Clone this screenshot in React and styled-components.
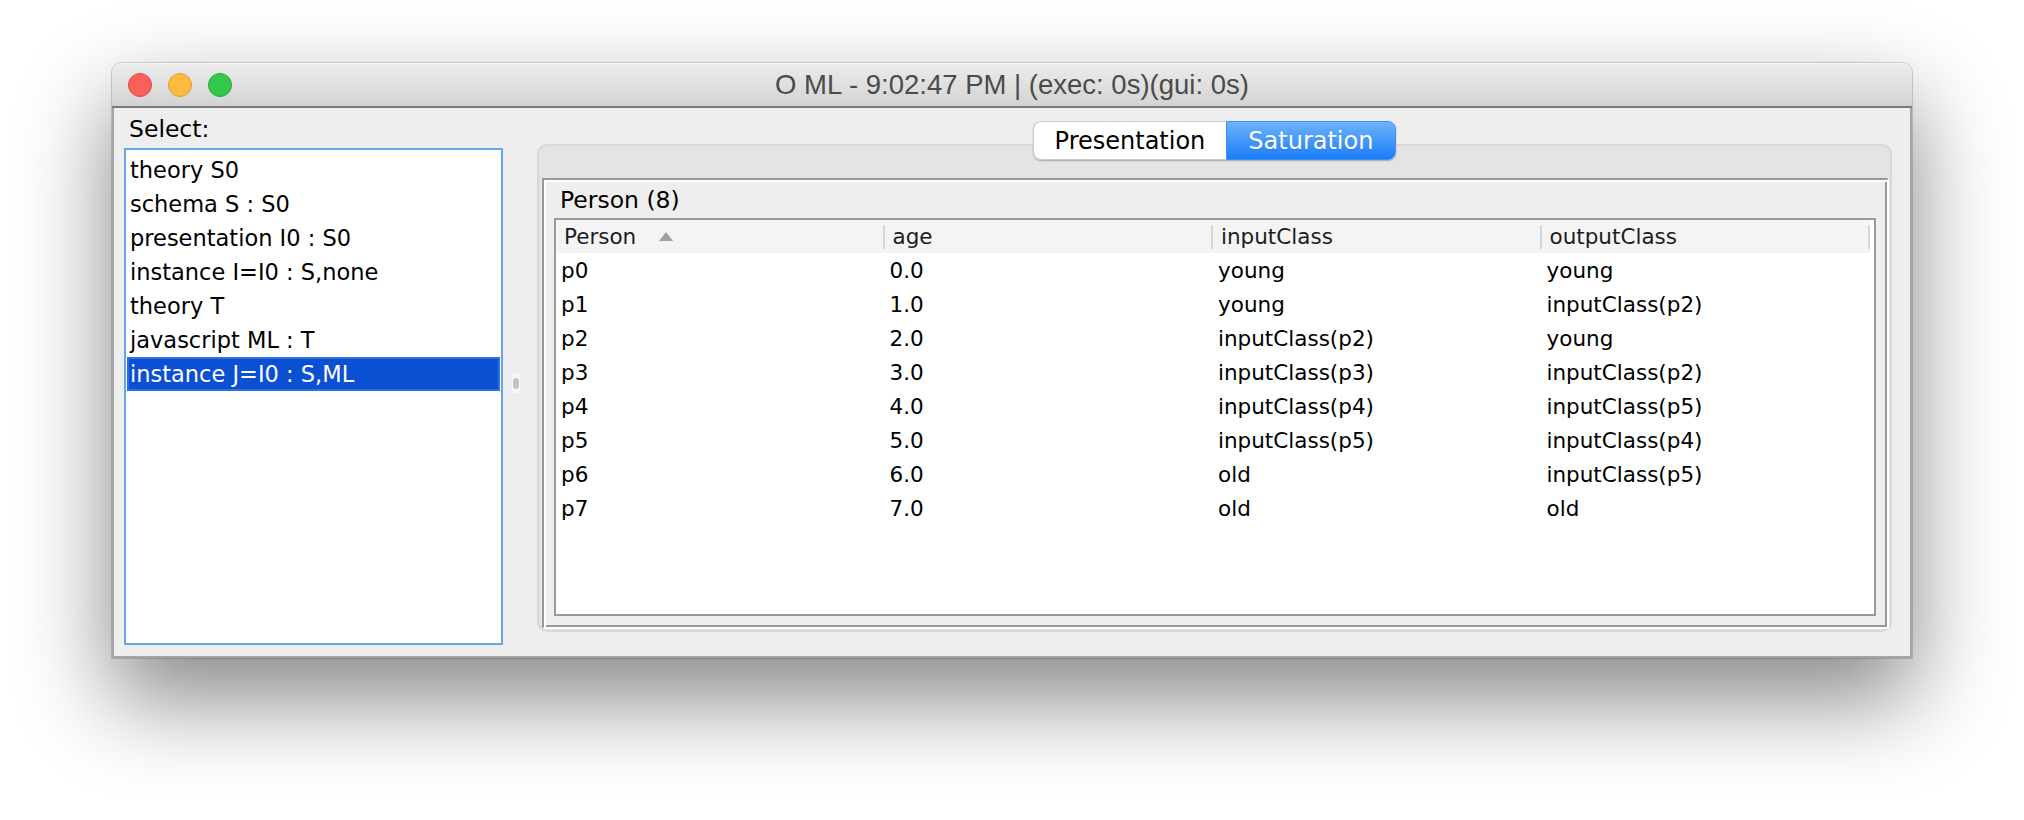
import React from "react";
import styled, { createGlobalStyle } from "styled-components";

const GlobalStyle = createGlobalStyle`
  html, body { margin: 0; padding: 0; background: #ffffff; }
  body { width: 2024px; height: 820px; overflow: hidden; font-family: "DejaVu Sans", "Open Sans", sans-serif; }
  * { box-sizing: border-box; }
`;

const Page = styled.div`
  width: 2024px;
  height: 820px;
  padding: 63px 0 0 112px;
`;

const Window = styled.div`
  width: 1800px;
  height: 595px;
  display: flex;
  flex-direction: column;
  border-radius: 10px 10px 0 0;
  background: #ededed;
  box-shadow: 0 40px 92px 2px rgba(0, 0, 0, 0.47), 0 0 0 1px rgba(0, 0, 0, 0.16);
`;

const TitleBar = styled.div`
  height: 45px;
  flex: none;
  display: grid;
  grid-template-columns: 1fr auto 1fr;
  align-items: center;
  background: linear-gradient(#ececec, #d3d3d3);
  border-radius: 10px 10px 0 0;
  border-bottom: 2px solid #7a7a7a;
  box-shadow: inset 0 1px 0 #f7f7f7;
`;

const Lights = styled.div`
  display: flex;
  gap: 16px;
  padding-left: 16px;
`;

const Light = styled.span`
  width: 24px;
  height: 24px;
  border-radius: 50%;
  background: ${(p) => p.$fill};
  border: 1px solid ${(p) => p.$edge};
`;

const Title = styled.div`
  font-family: "Liberation Sans", Arial, sans-serif;
  font-size: 27.5px;
  color: #4b4b4b;
  white-space: nowrap;
`;

const Body = styled.div`
  flex: 1;
  display: flex;
  min-height: 0;
  padding: 0 0 11px 10px;
  background: #eeeeee;
  border: 2px solid #a4a4a4;
  border-top: none;
`;

const LeftColumn = styled.div`
  width: 379px;
  flex: none;
  display: flex;
  flex-direction: column;
`;

const SelectLabel = styled.div`
  height: 40px;
  line-height: 43px;
  padding-left: 5px;
  font-size: 23.5px;
  color: #000;
`;

const List = styled.div`
  flex: 1;
  background: #fff;
  border: 2px solid #63a7ea;
  padding: 3px 1px 2px;
`;

const ListItem = styled.div`
  height: 34px;
  line-height: 31px;
  padding: 0 1px;
  border: 2px solid ${(p) => (p.$selected ? "#2f6fe0" : "transparent")};
  background: ${(p) => (p.$selected ? "#0b4fd2" : "transparent")};
  color: ${(p) => (p.$selected ? "#ffffff" : "#000000")};
  font-size: 22.5px;
  white-space: nowrap;
`;

const Divider = styled.div`
  width: 34px;
  flex: none;
  display: flex;
  align-items: center;
  padding: 13px 0 0 9px;
`;

const Handle = styled.div`
  width: 8px;
  height: 20px;
  border-radius: 2px;
  background: #f7f7f7;
  display: flex;
  align-items: center;
  justify-content: center;
  &::before {
    content: "";
    width: 6px;
    height: 11px;
    border-radius: 3px;
    background: #c4c4c4;
  }
`;

const RightColumn = styled.div`
  flex: 1;
  display: flex;
  flex-direction: column;
  padding: 13px 18px 13px 0;
  min-width: 0;
`;

const TabBar = styled.div`
  height: 39px;
  flex: none;
  display: flex;
  justify-content: center;
  margin-bottom: -16px;
  position: relative;
  z-index: 1;
`;

const Segmented = styled.div`
  display: flex;
  border-radius: 8px;
  box-shadow: 0 1px 1.5px rgba(0, 0, 0, 0.28);
`;

const Segment = styled.div`
  height: 39px;
  line-height: 38px;
  font-size: 24px;
  padding: ${(p) => (p.$active ? "0 22px 0 21px" : "0 21px")};
  color: ${(p) => (p.$active ? "#ffffff" : "#000000")};
  background: ${(p) => (p.$active ? "linear-gradient(#6db3fc, #1a7ef9)" : "#ffffff")};
  border: 1px solid ${(p) => (p.$active ? "#3f8ff4" : "#cbcbcb")};
  border-right: ${(p) => (p.$active ? "1px solid #3f8ff4" : "none")};
  border-radius: ${(p) => (p.$first ? "8px 0 0 8px" : "0 8px 8px 0")};
  text-shadow: ${(p) => (p.$active ? "0 1px 1px rgba(0,0,0,0.15)" : "none")};
  white-space: nowrap;
`;

const Pane = styled.div`
  flex: 1;
  display: flex;
  flex-direction: column;
  min-height: 0;
  background: #e4e4e4;
  border: 2px solid #d8d8d8;
  border-radius: 10px;
  padding: 32px 1px 1px 3px;
`;

const TitledPanel = styled.div`
  flex: 1;
  display: flex;
  flex-direction: column;
  min-height: 0;
  background: #eeeeee;
  border: 2px solid;
  border-color: #989898 #ffffff #ffffff #989898;
  box-shadow: inset 2px 2px 0 #ffffff, inset -2px -2px 0 #989898;
  padding: 2px 11px 11px 10px;
`;

const PanelTitle = styled.div`
  height: 36px;
  line-height: 36px;
  padding-left: 6px;
  font-size: 23.5px;
  color: #000;
`;

const ScrollPane = styled.div`
  flex: 1;
  background: #ffffff;
  border: 2px solid #9a9a9a;
  padding-right: 4px;
`;

const Row = styled.div`
  display: grid;
  grid-template-columns: repeat(4, 1fr);
`;

const HeaderCell = styled.div`
  position: relative;
  height: 33px;
  line-height: 33px;
  padding-left: 8px;
  background: #f4f4f4;
  font-size: 21.5px;
  color: #1c1c1c;
  display: flex;
  align-items: center;
  white-space: nowrap;
  &::after {
    content: "";
    position: absolute;
    right: 0;
    top: 5px;
    bottom: 4px;
    width: 2px;
    background: #d6d6d6;
  }
`;

const SortArrow = styled.svg`
  margin-left: 23px;
  flex: none;
`;

const Cell = styled.div`
  height: 34px;
  line-height: 36px;
  padding-left: 5px;
  font-size: 21.5px;
  color: #000;
  white-space: nowrap;
`;

const items = [
  "theory S0",
  "schema S : S0",
  "presentation I0 : S0",
  "instance I=I0 : S,none",
  "theory T",
  "javascript ML : T",
  "instance J=I0 : S,ML",
];

const rows = [
  ["p0", "0.0", "young", "young"],
  ["p1", "1.0", "young", "inputClass(p2)"],
  ["p2", "2.0", "inputClass(p2)", "young"],
  ["p3", "3.0", "inputClass(p3)", "inputClass(p2)"],
  ["p4", "4.0", "inputClass(p4)", "inputClass(p5)"],
  ["p5", "5.0", "inputClass(p5)", "inputClass(p4)"],
  ["p6", "6.0", "old", "inputClass(p5)"],
  ["p7", "7.0", "old", "old"],
];

export default function App() {
  return (
    <>
      <GlobalStyle />
      <Page>
        <Window>
          <TitleBar>
            <Lights>
              <Light $fill="#fc605c" $edge="#de4943" />
              <Light $fill="#fdbc40" $edge="#dea033" />
              <Light $fill="#34c84a" $edge="#27a934" />
            </Lights>
            <Title>O ML - 9:02:47 PM | (exec: 0s)(gui: 0s)</Title>
            <span />
          </TitleBar>
          <Body>
            <LeftColumn>
              <SelectLabel>Select:</SelectLabel>
              <List>
                {items.map((it, i) => (
                  <ListItem key={it} $selected={i === items.length - 1}>
                    {it}
                  </ListItem>
                ))}
              </List>
            </LeftColumn>
            <Divider>
              <Handle />
            </Divider>
            <RightColumn>
              <TabBar>
                <Segmented>
                  <Segment $first>Presentation</Segment>
                  <Segment $active>Saturation</Segment>
                </Segmented>
              </TabBar>
              <Pane>
                <TitledPanel>
                  <PanelTitle>Person (8)</PanelTitle>
                  <ScrollPane>
                    <Row>
                      <HeaderCell>
                        Person
                        <SortArrow width="14" height="9" viewBox="0 0 14 9">
                          <polygon points="7,0 14,9 0,9" fill="#a0a0a0" />
                        </SortArrow>
                      </HeaderCell>
                      <HeaderCell>age</HeaderCell>
                      <HeaderCell>inputClass</HeaderCell>
                      <HeaderCell>outputClass</HeaderCell>
                    </Row>
                    {rows.map((r) => (
                      <Row key={r[0]}>
                        {r.map((c, j) => (
                          <Cell key={j}>{c}</Cell>
                        ))}
                      </Row>
                    ))}
                  </ScrollPane>
                </TitledPanel>
              </Pane>
            </RightColumn>
          </Body>
        </Window>
      </Page>
    </>
  );
}
